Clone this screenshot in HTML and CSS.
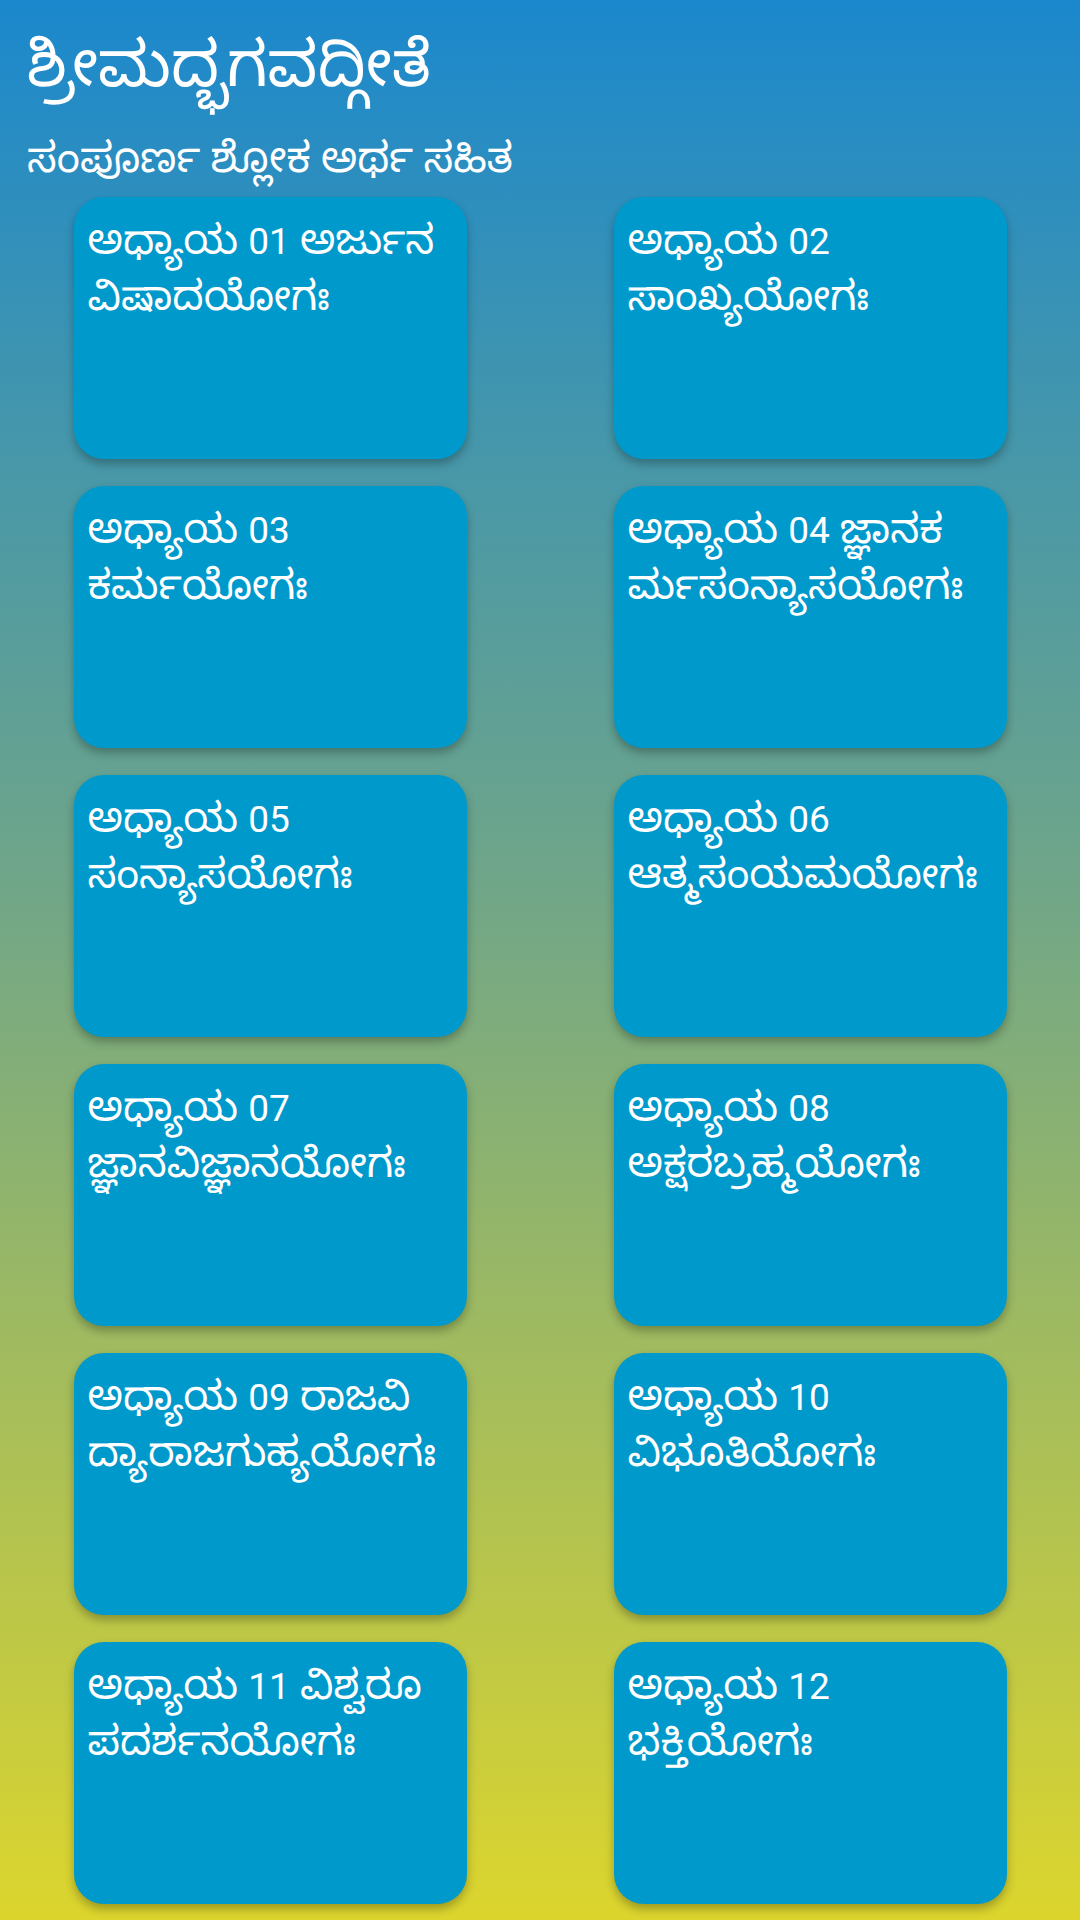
FILE: index.html
```html
<!DOCTYPE html>
<html lang="kn">
<head>
<meta charset="utf-8">
<title>ಶ್ರೀಮದ್ಭಗವದ್ಗೀತೆ</title>
<link rel="stylesheet" href="styles.css">
</head>
<body>
<div class="screen">
  <header class="header">
    <h1 class="title">ಶ್ರೀಮದ್ಭಗವದ್ಗೀತೆ</h1>
    <p class="subtitle">ಸಂಪೂರ್ಣ ಶ್ಲೋಕ ಅರ್ಥ ಸಹಿತ</p>
  </header>
  <main class="grid">
    <div class="cell"><div class="card">ಅಧ್ಯಾಯ <span class="num">01</span> ಅರ್ಜುನ<br>ವಿಷಾದಯೋಗಃ</div></div>
    <div class="cell"><div class="card">ಅಧ್ಯಾಯ <span class="num">02</span><br>ಸಾಂಖ್ಯಯೋಗಃ</div></div>
    <div class="cell"><div class="card">ಅಧ್ಯಾಯ <span class="num">03</span><br>ಕರ್ಮಯೋಗಃ</div></div>
    <div class="cell"><div class="card">ಅಧ್ಯಾಯ <span class="num">04</span> ಜ್ಞಾನಕ<br>ರ್ಮಸಂನ್ಯಾಸಯೋಗಃ</div></div>
    <div class="cell"><div class="card">ಅಧ್ಯಾಯ <span class="num">05</span><br>ಸಂನ್ಯಾಸಯೋಗಃ</div></div>
    <div class="cell"><div class="card">ಅಧ್ಯಾಯ <span class="num">06</span><br>ಆತ್ಮಸಂಯಮಯೋಗಃ</div></div>
    <div class="cell"><div class="card">ಅಧ್ಯಾಯ <span class="num">07</span><br>ಜ್ಞಾನವಿಜ್ಞಾನಯೋಗಃ</div></div>
    <div class="cell"><div class="card">ಅಧ್ಯಾಯ <span class="num">08</span><br>ಅಕ್ಷರಬ್ರಹ್ಮಯೋಗಃ</div></div>
    <div class="cell"><div class="card">ಅಧ್ಯಾಯ <span class="num">09</span> ರಾಜವಿ<br>ದ್ಯಾರಾಜಗುಹ್ಯಯೋಗಃ</div></div>
    <div class="cell"><div class="card">ಅಧ್ಯಾಯ <span class="num">10</span><br>ವಿಭೂತಿಯೋಗಃ</div></div>
    <div class="cell"><div class="card">ಅಧ್ಯಾಯ <span class="num">11</span> ವಿಶ್ವರೂ<br>ಪದರ್ಶನಯೋಗಃ</div></div>
    <div class="cell"><div class="card">ಅಧ್ಯಾಯ <span class="num">12</span><br>ಭಕ್ತಿಯೋಗಃ</div></div>
  </main>
</div>
</body>
</html>
```
FILE: styles.css
```css
html, body {
  margin: 0;
  padding: 0;
}
body {
  width: 1080px;
  height: 1920px;
  overflow: hidden;
  font-family: Roboto, "Noto Sans Kannada", "Noto Sans", sans-serif;
  color: #ffffff;
}
.screen {
  width: 1080px;
  height: 1920px;
  background: linear-gradient(180deg, #1b88cd 0%, #6ea58a 45%, #dcd52d 100%);
  display: flex;
  flex-direction: column;
}
.header {
  padding: 22px 0 0 27px;
}
.title {
  margin: 0;
  font-size: 63px;
  font-weight: 400;
  line-height: 86px;
}
.subtitle {
  margin: 20px 0 0 0;
  font-size: 42px;
  line-height: 60px;
}
.grid {
  display: grid;
  grid-template-columns: 540px 540px;
  grid-auto-rows: 289px;
}
.cell {
  display: flex;
  justify-content: center;
  padding-top: 9px;
}
.card {
  width: 393px;
  height: 262px;
  box-sizing: border-box;
  background: #0099cc;
  border-radius: 30px;
  box-shadow: 0 5px 10px rgba(0, 0, 0, 0.28);
  padding: 16px 14px;
  font-size: 41px;
  line-height: 54px;
}
.num {
  font-size: 37px;
}
```
